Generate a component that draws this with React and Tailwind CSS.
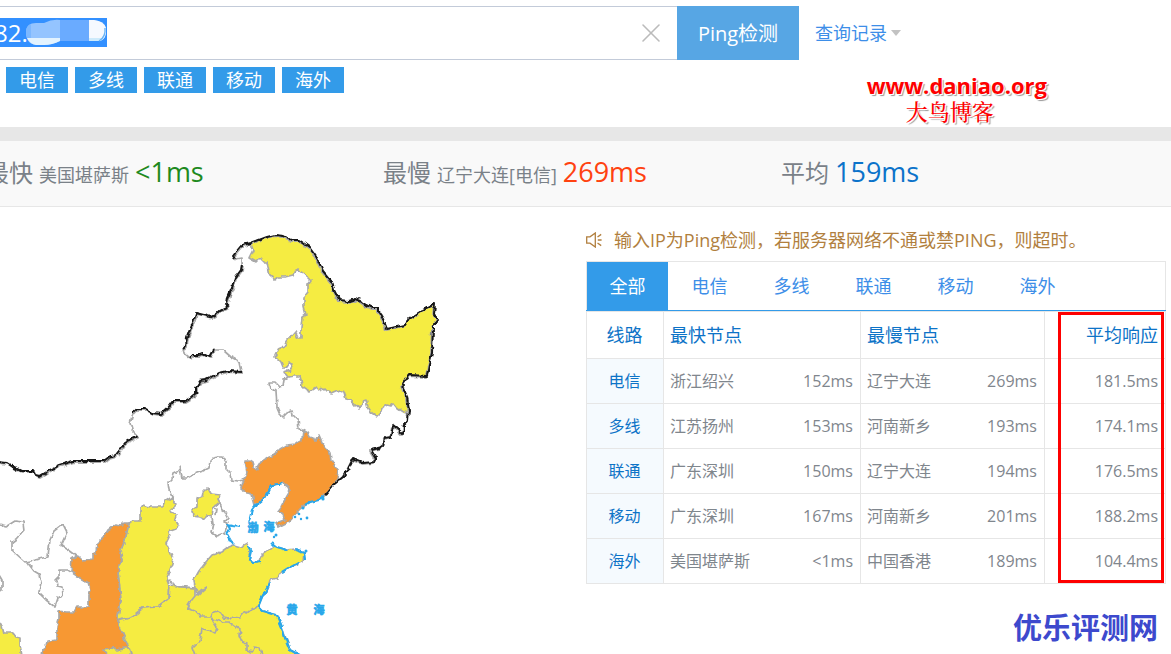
import React, { useState } from "react";
import { X } from "lucide-react";
import clsx from "clsx";

const LINES = ["电信", "多线", "联通", "移动", "海外"];
const TABS = ["全部", ...LINES];

const ROWS = [
  { line: "电信", fast: "浙江绍兴", fastMs: "152ms", slow: "辽宁大连", slowMs: "269ms", avg: "181.5ms" },
  { line: "多线", fast: "江苏扬州", fastMs: "153ms", slow: "河南新乡", slowMs: "193ms", avg: "174.1ms" },
  { line: "联通", fast: "广东深圳", fastMs: "150ms", slow: "辽宁大连", slowMs: "194ms", avg: "176.5ms" },
  { line: "移动", fast: "广东深圳", fastMs: "167ms", slow: "河南新乡", slowMs: "201ms", avg: "188.2ms" },
  { line: "海外", fast: "美国堪萨斯", fastMs: "<1ms", slow: "中国香港", slowMs: "189ms", avg: "104.4ms" },
];

const YELLOW = "#f5ec42";
const ORANGE = "#f79833";

// Filled provinces, drawn in page units
const PROVINCES = [
  // Heilongjiang
  { fill: YELLOW, d: "M251 244L259 240L267 238L275 236L284 237L291 241L299 241L305 244L309 248L313 254L317 259L320 267L323 272L328 278L332 283L334 291L338 301L349 301L360 301L366 305L372 308L379 309L383 320L387 329L396 327L405 325L408 320L415 316L423 310L435 305L434 315L437 320L433 327L432 340L432 353L429 365L427 376L409 375L402 385L405 392L408 400L407 413L401 411L397 408L393 403L391 406L387 405L382 408L380 414L377 417L372 413L368 407L366 400L363 401L360 409L355 405L351 400L346 399L344 392L339 390L332 393L327 392L323 388L318 390L316 387L310 391L305 388L302 385L300 376L294 376L288 377L284 372L290 370L293 365L290 362L287 367L283 367L281 362L275 356L279 348L284 346L288 340L295 332L298 338L301 338L301 327L302 318L306 315L304 307L304 297L308 292L308 284L311 280L306 275L298 269L295 270L293 275L285 277L279 277L275 280L270 276L267 262L264 262L260 258L256 262L249 258L253 250Z" },
  // Liaoning
  { fill: ORANGE, d: "M303 430L308 433L310 437L313 438L315 442L319 435L322 442L326 447L330 453L331 460L338 470L337 480L325 495L319 500L310 502L300 509L288 522L278 527L277 523L285 520L283 515L278 511L281 507L283 503L290 491L288 487L283 483L272 485L265 498L255 505L252 494L247 493L241 489L242 484L244 480L247 472L245 460L249 460L252 462L253 468L256 470L261 462L267 458L272 456L276 453L280 449L287 445L295 444L302 439Z" },
  // Beijing
  { fill: YELLOW, d: "M207 488L209 492L212 494L220 495L218 499L220 503L213 508L212 517L207 516L204 519L200 517L193 516L192 510L197 507L197 498L202 496L203 492Z" },
  // Shanxi
  { fill: YELLOW, d: "M129 523L134 521L141 521L141 508L143 505L150 507L163 507L166 501L172 497L174 503L177 504L170 511L176 515L175 520L178 524L176 529L168 532L169 537L166 543L173 558L172 564L167 578L169 585L168 599L157 607L143 608L133 616L117 621L121 600L118 573L119 566L123 561L120 552L125 540Z" },
  // Shaanxi
  { fill: ORANGE, d: "M129 523L124 523L121 526L115 525L108 530L104 537L97 544L96 553L93 554L93 559L83 560L80 557L77 556L72 559L71 572L80 578L89 583L91 590L89 596L89 607L77 607L74 612L65 612L59 611L59 620L57 627L57 640L47 641L46 648L43 650L42 656L131 656L129 646L124 638L122 628L117 621L121 600L118 573L119 566L123 561L120 552L125 540Z" },
  // Henan, Anhui and Jiangsu
  { fill: YELLOW, d: "M117 621L125 619L133 616L143 608L157 607L168 599L169 585L195 588L195 596L258 607L262 611L277 615L282 627L290 650L300 656L131 656L129 648L122 632Z" },
  { fill: YELLOW, d: "M103 649L112 648L117 650L124 648L129 648L131 656L108 656Z" },
  // Shandong
  { fill: YELLOW, d: "M195 588L194 580L199 571L205 563L212 555L221 552L228 547L233 545L240 547L247 543L250 550L249 559L254 562L260 561L262 556L268 551L273 546L280 548L287 550L295 549L304 552L303 562L290 567L280 573L277 578L270 580L268 588L262 597L258 607L252 609L247 613L245 611L240 617L233 616L230 619L223 618L218 611L212 613L210 617L200 617L195 611L187 608L191 601L195 596L200 591L207 587L198 595Z" },
  // Sichuan
  { fill: YELLOW, d: "M-2 622L2 625L4 633L12 633L15 637L20 638L20 645L22 656L-2 656Z" },
];

const BORDERS = [
  // Jilin
  "M288 377L284 380L283 386L279 387L275 383L270 383L271 388L276 391L277 407L280 414L283 417L287 413L292 411L293 415L298 420L299 428L303 431",
  // Hebei
  "M244 480L238 481L231 480L230 473L226 469L226 462L223 457L218 457L213 458L210 461L209 468L203 471L197 473L193 475L187 478L182 478L180 467L177 471L173 473L172 479L168 483L169 490L172 497M167 580L180 587L195 588",
  // Tianjin
  "M220 503L222 510L225 512L228 518L225 522L228 523L225 533L217 536L211 532L213 523L212 517M213 508L217 509L216 515",
  // Gansu and Ningxia
  "M-1 524L7 526L15 521L23 522L24 530L16 539L12 542L12 550L25 562L36 560L48 557L50 540L54 531L63 524L67 532L61 545L69 550L77 556",
  "M27 562L34 571L39 574L41 582L39 593L46 600L55 607L58 598L63 595L62 587L57 586L56 581L60 577L60 570L68 570L71 572",
  "M-1 575L2 580L2 590L-1 592",
  // Jiangsu and Anhui
  "M211 618L217 627L215 634L208 630L202 629L200 640L192 648L195 656M211 618L222 622L229 622L240 630L239 635L242 642L247 644L247 650L252 652L254 647L260 648L262 656",
];

const FRONTIER_NORTH =
  "M196 393L190 398L185 401L173 401L168 408L161 414L152 413L145 409L137 409L133 413M138 436L130 440L125 443L115 456L108 458L104 461L90 461L73 461L60 465L50 470L40 476L35 475L33 471L21 471L13 467L7 463L-1 462";
const FRONTIER_EAST =
  "M251 243L242 245L237 251L233 256L235 259M242 264L241 270L235 278L232 288L228 297L227 304L228 306L220 310L215 315L211 317L204 315L196 313L192 324L187 337L186 345L183 348M190 358L193 355L198 355L203 354L209 357L213 350M242 372L228 371L219 373L210 378L206 380L200 381L196 387L196 393";
const FRONTIER_NE =
  "M251 243L259 240L267 237L275 235L284 236L291 240L299 240L309 247L317 258L323 271L332 282L334 290L339 300L349 301L355 299L360 301L366 305L372 308L379 308L379 313L383 319L387 329L396 327L405 325L408 320L415 315L423 310L435 304L434 314L438 320L433 327L432 353L429 365L427 376L409 375L402 385L407 397L409 411L408 421L404 425L404 435L398 429L393 425L391 437L385 438L383 447L371 450L376 458L374 462L363 463L353 459L348 469L343 477L334 484L325 495";
const FRONTIER_THIN =
  "M133 413L130 423L132 430L138 436M235 259L241 258L241 264M183 348L184 353L190 358M213 350L223 350L231 357L240 362L242 372";
const COAST =
  "M324 497L319 500L310 502L305 505M283 483L279 484L272 485L268 493L265 498L256 505L252 510L250 518L248 522M240 527L232 526L228 525L230 529L227 534L231 541L234 544M248 546L251 551L249 559L254 562L261 561M272 543L277 547L284 549L287 551M295 549L304 552L305 560M299 562L290 567L282 572M270 583L262 597L258 607L262 611L277 615L282 627L285 638L290 650L300 655";

function ChinaMap() {
  return (
    <svg viewBox="0 207 450 447" width="450" height="447" className="block shrink-0" role="img" aria-label="map">
      {/* roughens the straight segments into natural border lines */}
      <filter id="rough" filterUnits="userSpaceOnUse" x="-5" y="207" width="460" height="455" colorInterpolationFilters="sRGB">
        <feTurbulence type="fractalNoise" baseFrequency="0.16" numOctaves="2" seed="4" />
        <feDisplacementMap in="SourceGraphic" scale="5" xChannelSelector="R" yChannelSelector="G" />
      </filter>
      <g filter="url(#rough)">
        <g stroke="#a9a9a9" strokeWidth="1.7" strokeLinejoin="round">
          {PROVINCES.map((p) => (
            <path key={p.d} d={p.d} fill={p.fill} />
          ))}
          {BORDERS.map((d) => (
            <path key={d} d={d} fill="none" />
          ))}
          <path d={FRONTIER_THIN} fill="none" />
        </g>
        <g fill="none" stroke="#a9a9a9" strokeWidth="2" strokeLinejoin="round">
          <g transform="translate(1 1)">
            <path d={FRONTIER_NORTH} />
            <path d={FRONTIER_EAST} />
          </g>
          <path d={FRONTIER_NE} transform="translate(-1 1)" />
        </g>
        <g fill="none" stroke="#161616" strokeWidth="2" strokeLinejoin="round">
          <path d={FRONTIER_NORTH} />
          <path d={FRONTIER_EAST} />
          <path d={FRONTIER_NE} />
        </g>
        <path d={COAST} fill="none" stroke="#29a7ea" strokeWidth="2.2" strokeLinejoin="round" />
      </g>
      <g fill="#29a7ea">
        <circle cx="303" cy="508" r="1.5" />
        <circle cx="295" cy="517" r="1.3" />
        <circle cx="299" cy="514" r="1.3" />
        <circle cx="301" cy="519" r="1.2" />
        <circle cx="307" cy="518" r="1.4" />
        <circle cx="276" cy="535" r="1.5" />
        <circle cx="274" cy="537" r="1.2" />
        <circle cx="306" cy="551" r="1.5" />
        <circle cx="323" cy="499" r="1.6" />
      </g>
      <g
        fill="#29a7ea"
        stroke="#29a7ea"
        strokeWidth="0.7"
        fontSize="11"
        textAnchor="middle"
        className="font-bold"
      >
        <text x="253" y="532">渤</text>
        <text x="269" y="531">海</text>
        <text x="292" y="614">黄</text>
        <text x="319" y="614">海</text>
      </g>
    </svg>
  );
}

function Stat({ label, place, value, color }) {
  return (
    <div className="flex items-baseline gap-1.5 whitespace-nowrap">
      <span className="text-2xl">{label}</span>
      {place && <span className="text-lg">{place}</span>}
      <span className={clsx("text-[27px]", color)}>{value}</span>
    </div>
  );
}

function SearchBar() {
  const [host, setHost] = useState("82.");

  return (
    <form className="flex h-[54px]" onSubmit={(e) => e.preventDefault()}>
      <div className="relative flex min-w-0 flex-1 items-center overflow-hidden border-y border-[#c3cbd9]">
        <span className="absolute left-0 top-[11px] h-[29px] w-[107px] bg-[#3390ff]" />
        <input
          aria-label="IP"
          value={host}
          onChange={(e) => setHost(e.target.value)}
          className="relative -ml-1.5 min-w-0 flex-1 bg-transparent text-2xl text-white outline-none"
        />
        <svg className="absolute left-6 top-3 h-[27px] w-[84px]" viewBox="0 0 84 27" aria-hidden="true">
          <path d="M2 13C2 7 6 4 12 4L20 4Q28 0 36 1L70 1Q80 2 82 9Q83 20 76 22L36 22Q28 26 20 26L12 26Q2 25 2 13Z" fill="#94c4ff" />
          <path d="M3 19L36 19V22Q28 26 20 26L12 26Q6 25 3 19Z" fill="#e3f3ff" />
          <path d="M2 13C2 9 4 6 7 5V19H3Q2 16 2 13Z" fill="#7db8ff" />
          <path d="M36 1H65V22H36Z" fill="#6aabff" />
          <path d="M65 1H70Q80 2 82 9Q83 20 76 22L65 22Z" fill="#f5f9ff" />
          <path d="M65 19H80Q79 21 76 22H65Z" fill="#cdeafb" />
          <path d="M75 22Q82 18 81 9" fill="none" stroke="#69b4f5" strokeWidth="1.4" />
        </svg>
        <button type="button" aria-label="clear" onClick={() => setHost("")} className="mr-2.5 text-[#bbb]">
          <X size={32} strokeWidth={1.2} />
        </button>
      </div>
      <div className="flex w-[494px] shrink-0">
        <button type="submit" className="w-[122px] bg-[#57a6e4] pt-0.5 text-xl text-white">
          Ping检测
        </button>
        <a href="#history" className="flex items-center gap-1 self-center pl-4 text-lg text-[#3d8ee8]">
          查询记录
          <span className="border-x-[5px] border-t-[6px] border-x-transparent border-t-[#c2c2c2]" />
        </a>
      </div>
    </form>
  );
}

function Notice() {
  return (
    <p className="flex items-center gap-3 whitespace-nowrap pb-[7px] pt-[19px] text-lg leading-7 text-[#b17f3e]">
      <svg width="16" height="16" viewBox="0 0 16 16" fill="none" stroke="currentColor" strokeWidth="1.3" className="shrink-0">
        <path d="M4 4.8H0.7V11.2H4L9.3 15V1L4 4.8Z" />
        <path d="M11.5 5L15.2 2.4M11.8 8H15.6M11.5 11L15.2 13.6" />
      </svg>
      输入IP为Ping检测，若服务器网络不通或禁PING，则超时。
    </p>
  );
}

function ResultTable() {
  return (
    <table className="w-full table-fixed border-collapse text-left text-[#7f868d] [&_td]:border [&_td]:border-[#e6e6e6] [&_td]:pl-1.5 [&_td]:pr-[7px] [&_th]:border [&_th]:border-[#e6e6e6] [&_th]:pl-1.5 [&_th]:pr-[7px] [&_th]:font-normal [&_th]:text-[#0d73c7]">
      <colgroup>
        <col className="w-[77px]" />
        <col className="w-[197px]" />
        <col className="w-[184px]" />
        <col />
      </colgroup>
      <thead>
        <tr className="h-[47px] text-lg">
          <th scope="col" className="text-center">线路</th>
          <th scope="col">最快节点</th>
          <th scope="col">最慢节点</th>
          <th scope="col" className="text-right">平均响应</th>
        </tr>
      </thead>
      <tbody>
        {ROWS.map((row) => (
          <tr key={row.line} className="h-[45px]">
            <th scope="row" className="bg-[#f5fafe] text-center">{row.line}</th>
            <td>
              <div className="flex justify-between">
                <span>{row.fast}</span>
                <span>{row.fastMs}</span>
              </div>
            </td>
            <td>
              <div className="flex justify-between">
                <span>{row.slow}</span>
                <span>{row.slowMs}</span>
              </div>
            </td>
            <td className="text-right">{row.avg}</td>
          </tr>
        ))}
      </tbody>
    </table>
  );
}

export default function App() {
  const [tab, setTab] = useState("全部");

  return (
    <div className="overflow-hidden bg-white font-['Open_Sans','Noto_Sans_CJK_SC',sans-serif] text-base">
      <header className="relative h-[127px] pt-1.5">
        <SearchBar />
        <div className="mt-[7px] flex gap-[7px] pl-1.5">
          {LINES.map((name) => (
            <button key={name} type="button" className="h-[26px] w-[62px] bg-[#339be9] text-lg leading-[26px] text-white">
              {name}
            </button>
          ))}
        </div>
        <div className="absolute right-[124px] top-[72px] text-center text-[22px] leading-[26px] text-[#fe0000] [text-shadow:-1px_-1px_0_#fff,1px_1px_0_#fff,2px_2px_1px_#999]">
          <div className="font-bold">www.daniao.org</div>
          <div className="pr-3.5 font-['Noto_Serif_CJK_SC','Noto_Sans_CJK_SC',serif] font-medium">大鸟博客</div>
        </div>
      </header>

      <section className="border-b border-t-[14px] border-b-[#e7e7e7] border-t-[#e7e7e7] bg-[#f9f9f9]">
        <div className="-ml-[15px] -mr-2 grid h-[65px] grid-cols-3 items-center pb-0.5 text-[#7a8188]">
          <Stat label="最快" place="美国堪萨斯" value="<1ms" color="text-[#1e8a1e]" />
          <Stat label="最慢" place="辽宁大连[电信]" value="269ms" color="text-[#ff4210]" />
          <Stat label="平均" value="159ms" color="text-[#0c73ca]" />
        </div>
      </section>

      <main className="flex justify-between pr-[5px]">
        <ChinaMap />
        <div className="w-[580px] shrink-0">
          <Notice />
          <div className="flex h-[49px] gap-px border-x border-t border-[#e6e6e6]">
            {TABS.map((name) => (
              <button
                key={name}
                type="button"
                onClick={() => setTab(name)}
                className={clsx("w-[81px] text-lg", tab === name ? "bg-[#339be9] text-white" : "text-[#3d8ee8]")}
              >
                {name}
              </button>
            ))}
          </div>
          <div className="relative border-t border-[#339be9]">
            <ResultTable />
            <div className="pointer-events-none absolute bottom-px right-0.5 top-px w-[106px] border-[3px] border-[#fe0000]" />
          </div>
          <div className="mt-6 pr-2 text-right text-[29px] font-bold leading-10 text-[#3d49cd]">优乐评测网</div>
        </div>
      </main>
    </div>
  );
}
